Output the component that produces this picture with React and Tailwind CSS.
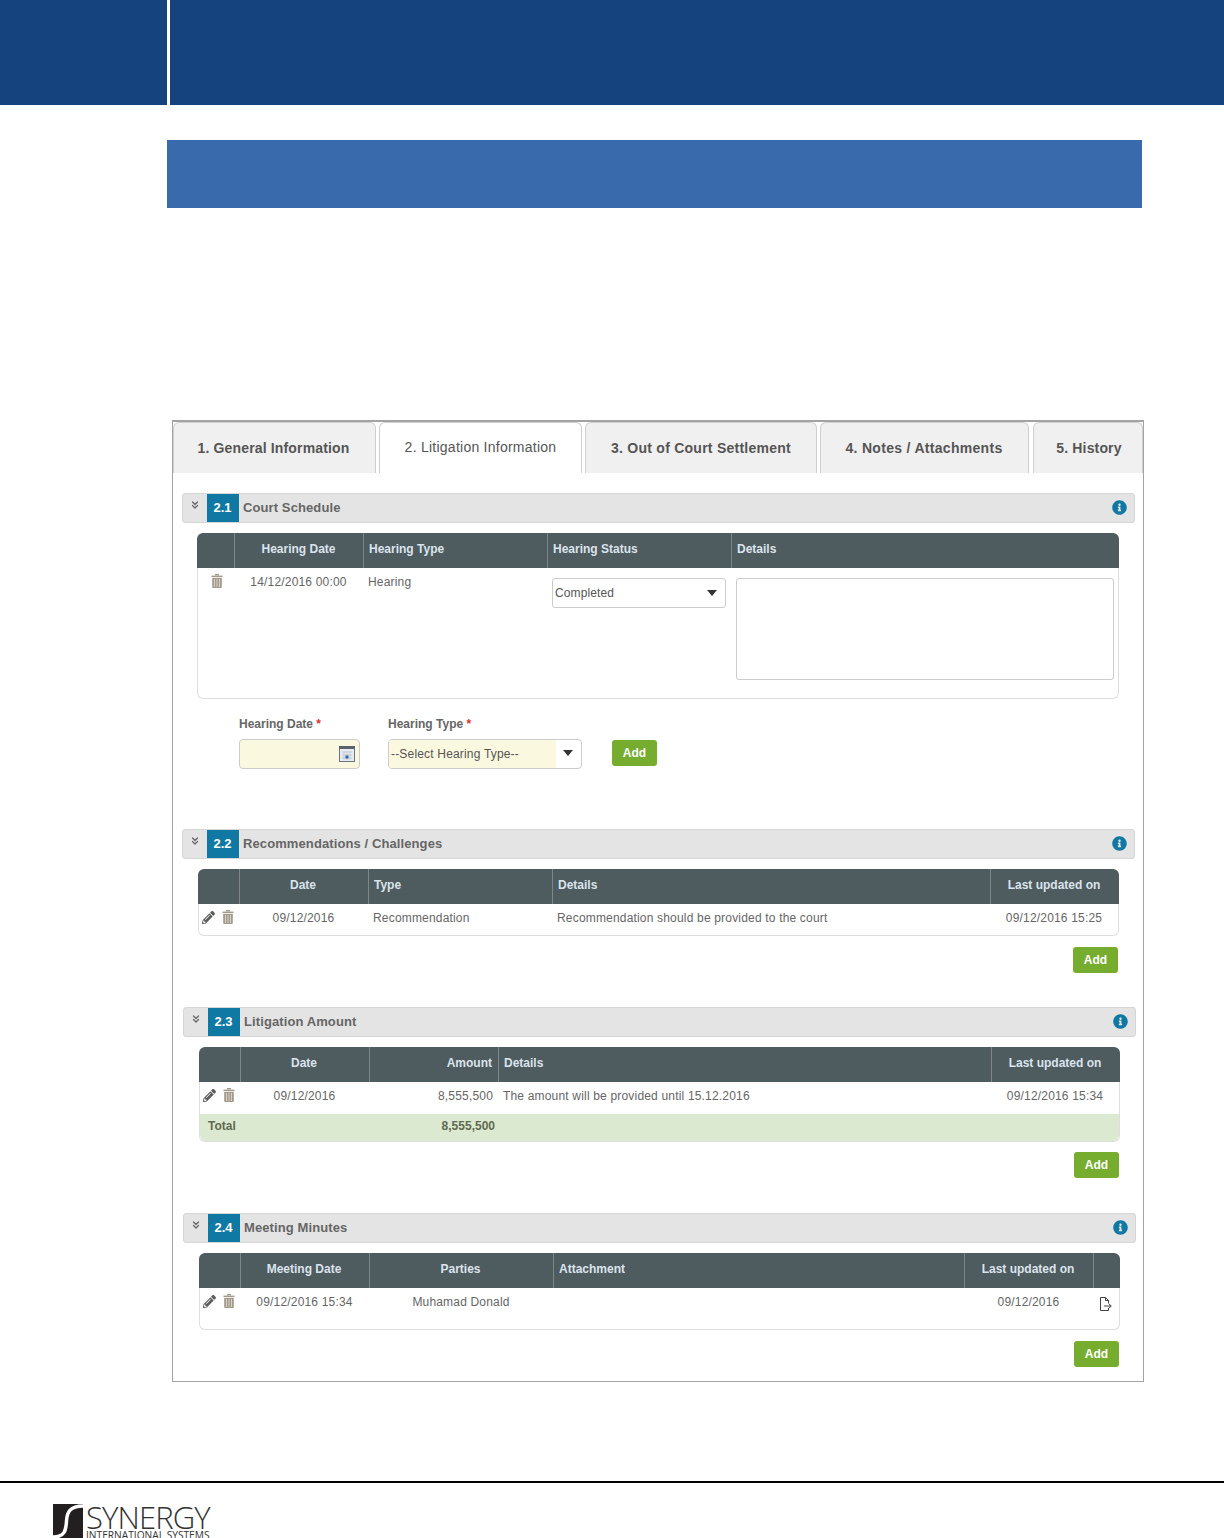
import { ChevronsDown } from 'lucide-react'
import { FaInfoCircle, FaPencilAlt } from 'react-icons/fa'

const tabs = [
  { label: '1. General Information', cls: 'w-[203px] mr-[3px] pr-[2px] tracking-[0.15px]' },
  { label: '2. Litigation Information', cls: 'w-[203px] mr-[3px] tracking-[0.25px]', active: true },
  { label: '3. Out of Court Settlement', cls: 'w-[232px] mr-[3px] tracking-[0.25px]' },
  { label: '4. Notes / Attachments', cls: 'w-[209px] mr-[4px] pr-[1px] tracking-[0.3px]' },
  { label: '5. History', cls: 'w-[110px] pl-[2px] tracking-[0.15px]' },
]

const Trash = () => (
  <svg width="12" height="14" viewBox="0 0 12 14" fill="#a39a8c">
    <rect x="4" y="0" width="4" height="1.4" />
    <rect x="0.5" y="1.6" width="11" height="1.6" />
    <path d="M1.2 4h9.6v9a1 1 0 0 1-1 1H2.2a1 1 0 0 1-1-1z" />
    <path d="M3.500 5v8M6 5v8M8.500 5v8" stroke="#e6e2da" strokeWidth="0.8" />
  </svg>
)

const RowIcons = ({ cls = 'pt-[6px]' }) => (
  <div className={`flex items-center self-start pl-[3px] gap-[7px] ${cls}`}>
    <FaPencilAlt className="text-[13px] text-[#5d5d5d]" />
    <Trash />
  </div>
)

const AddButton = ({ cls }) => (
  <button className={`w-[45px] h-[26px] rounded-[3px] bg-[#76ad2e] text-white font-bold text-[12px] ${cls}`}>Add</button>
)

const Section = ({ num, title, cls, children }) => (
  <section className={cls}>
    <div className="h-[30px] w-[953px] flex items-stretch bg-[#e4e4e4] border border-[#d6d6d6] rounded-[3px]">
      <div className="w-[24px] flex justify-center pt-[5px]">
        <ChevronsDown size={12} strokeWidth={2.5} className="text-[#666]" />
      </div>
      <div className="w-[32px] bg-[#0f78a3] text-white font-bold text-[13px] pr-[1px] flex items-center justify-center">{num}</div>
      <div className="flex-1 pl-[4px] pb-[1px] flex items-center text-[13px] tracking-[0.1px] font-bold text-[#666]">{title}</div>
      <div className="pr-[7px] pb-[1px] flex items-center">
        <FaInfoCircle className="text-[15px] text-[#0f78a3]" />
      </div>
    </div>
    {children}
  </section>
)

const Head = ({ children, cls = '' }) => (
  <div className={`flex items-center pb-[3px] border-l border-[#7d8789] text-[12px] font-bold text-[#dbe3ec] ${cls}`}>{children}</div>
)

const Cell = ({ children, cls = '' }) => (
  <div className={`text-[12px] tracking-[0.18px] text-[#666] ${cls}`}>{children}</div>
)

const CalendarIcon = () => (
  <svg width="16" height="16" viewBox="0 0 16 16">
    <rect x="0.5" y="0.5" width="15" height="15" fill="#e8ecf2" stroke="#6b7480" />
    <rect x="0" y="0" width="16" height="3" fill="#59626d" />
    <path d="M3 6h10M3 9h10M3 12h10M5 5v9M8 5v9M11 5v9" stroke="#b9c1cc" strokeWidth="0.7" />
    <rect x="6.500" y="9.500" width="3" height="3" fill="#2b64a8" />
  </svg>
)

const FileIcon = () => (
  <svg width="13" height="14" viewBox="0 0 13 14" fill="none" stroke="#444" strokeWidth="1">
    <path d="M1.500 0.500h5l3 3v3M6.500 0.500v3h3M9.500 11v2.500h-8V0.500" />
    <path d="M5 9h7M10 7l2.300 2-2.300 2" />
  </svg>
)

const Arrow = () => <span className="w-0 h-0 border-x-[5px] border-x-transparent border-t-[6px] border-t-[#333]" />

const SynergyLogo = () => (
  <div className="ml-[53px] mt-[21px] flex font-['Open_Sans',sans-serif] text-[#333]">
    <svg width="30" height="35" viewBox="0 0 30 35">
      <rect width="30" height="35" fill="#231f20" />
      <path d="M30 2C17 2 14 8 13.500 17S12 33 0 33" fill="none" stroke="#fff" strokeWidth="3.500" />
    </svg>
    <div className="ml-[3px] pt-[1px]">
      <div className="text-[31px] leading-[25px] font-light tracking-[-0.9px] whitespace-nowrap">SYNERGY</div>
      <div className="text-[10.200px] leading-[10px] whitespace-nowrap">INTERNATIONAL SYSTEMS</div>
    </div>
  </div>
)

const App = () => {
  return (
    <div className="h-[1538px] w-[1224px] overflow-hidden bg-white font-['Liberation_Sans',Arial,sans-serif]">
      <header className="h-[105px] bg-[#14437d] flex">
        <div className="w-[167px]" />
        <div className="w-[3px] bg-white" />
      </header>

      <div className="ml-[167px] mt-[35px] w-[975px] h-[68px] bg-[#396aab]" />

      <div className="ml-[172px] mt-[212px] w-[972px] border border-t-2 border-[#a3a3a3]">
        <div className="flex h-[51px]">
          {tabs.map((t) => (
            <div
              key={t.label}
              className={`${t.cls} flex items-center justify-center rounded-t-[6px] border-x border-t border-[#cfcfcf] text-[#555] text-[14px] ${t.active ? 'bg-white pb-[2px] font-normal' : 'bg-[#f0f0f0] font-bold'}`}
            >
              {t.label}
            </div>
          ))}
        </div>

        <Section num="2.1" title="Court Schedule" cls="ml-[9px] mt-[20px]">
          <div className="ml-[15px] mt-[10px] w-[922px]">
            <div className="h-[35px] rounded-t-[6px] bg-[#4e5b5f] grid grid-cols-[37px_129px_184px_184px_388px]">
              <div />
              <Head cls="justify-center pr-[1px]">Hearing Date</Head>
              <Head cls="pl-[5px]">Hearing Type</Head>
              <Head cls="pl-[5px]">Hearing Status</Head>
              <Head cls="pl-[5px]">Details</Head>
            </div>
            <div className="h-[131px] rounded-b-[6px] border border-t-0 border-[#dedede] grid grid-cols-[36px_129px_184px_184px_387px]">
              <div className="pl-[13px] pt-[6px]"><Trash /></div>
              <Cell cls="pt-[5px] text-center">14/12/2016 00:00</Cell>
              <Cell cls="pt-[5px] pl-[5px]">Hearing</Cell>
              <div className="pt-[10px] pl-[5px]">
                <div className="w-[174px] h-[30px] flex items-center justify-between pl-[2px] pr-[8px] rounded-[3px] border border-[#ccc] text-[12px] tracking-[0.1px] text-[#555]">
                  Completed
                  <Arrow />
                </div>
              </div>
              <div className="pt-[10px] pl-[5px]">
                <div className="w-[378px] h-[102px] rounded-[3px] border border-[#ccc]" />
              </div>
            </div>
          </div>
          <div className="ml-[57px] mt-[18px] flex items-start">
            <div className="w-[149px]">
              <div className="text-[12px] font-bold text-[#666] h-[15px] leading-[15px]">Hearing Date <span className="text-[#d33]">*</span></div>
              <div className="mt-[7px] w-[121px] h-[30px] rounded-[4px] border border-[#ccc] bg-[#fbf8e0] flex items-center justify-end pr-[4px]">
                <CalendarIcon />
              </div>
            </div>
            <div className="w-[224px]">
              <div className="text-[12px] font-bold text-[#666] h-[15px] leading-[15px]">Hearing Type <span className="text-[#d33]">*</span></div>
              <div className="mt-[7px] w-[194px] h-[30px] rounded-[4px] border border-[#ccc] flex overflow-hidden">
                <div className="w-[167px] bg-[#fbf8e0] pl-[2px] flex items-center text-[12px] tracking-[0.18px] text-[#555]">--Select Hearing Type--</div>
                <div className="flex-1 flex items-center justify-center pb-[2px] pr-[2px]"><Arrow /></div>
              </div>
            </div>
            <AddButton cls="mt-[23px]" />
          </div>
        </Section>

        <Section num="2.2" title="Recommendations / Challenges" cls="ml-[9px] mt-[60px]">
          <div className="ml-[16px] mt-[10px] w-[921px]">
            <div className="h-[35px] rounded-t-[6px] bg-[#4e5b5f] grid grid-cols-[41px_129px_184px_438px_129px]">
              <div />
              <Head cls="justify-center pr-[2px]">Date</Head>
              <Head cls="pl-[5px]">Type</Head>
              <Head cls="pl-[5px]">Details</Head>
              <Head cls="justify-center pr-[2px]">Last updated on</Head>
            </div>
            <div className="h-[32px] pb-[4px] rounded-b-[6px] border border-t-0 border-[#dedede] grid grid-cols-[40px_129px_184px_438px_128px] items-center">
              <RowIcons />
              <Cell cls="text-center">09/12/2016</Cell>
              <Cell cls="pl-[5px]">Recommendation</Cell>
              <Cell cls="pl-[5px]">Recommendation should be provided to the court</Cell>
              <Cell cls="text-center">09/12/2016 15:25</Cell>
            </div>
          </div>
          <div className="mt-[11px] w-[936px] flex justify-end">
            <AddButton />
          </div>
        </Section>

        <Section num="2.3" title="Litigation Amount" cls="ml-[10px] mt-[34px]">
          <div className="ml-[16px] mt-[10px] w-[921px]">
            <div className="h-[35px] rounded-t-[6px] bg-[#4e5b5f] grid grid-cols-[41px_129px_129px_493px_129px]">
              <div />
              <Head cls="justify-center pr-[2px]">Date</Head>
              <Head cls="justify-end pr-[6px]">Amount</Head>
              <Head cls="pl-[5px]">Details</Head>
              <Head cls="justify-center pr-[2px]">Last updated on</Head>
            </div>
            <div className="rounded-b-[6px] border border-t-0 border-[#dedede]">
              <div className="h-[32px] pb-[4px] grid grid-cols-[40px_129px_129px_493px_128px] items-center">
                <RowIcons />
                <Cell cls="text-center">09/12/2016</Cell>
                <Cell cls="text-right pr-[5px]">8,555,500</Cell>
                <Cell cls="pl-[5px]">The amount will be provided until 15.12.2016</Cell>
                <Cell cls="text-center">09/12/2016 15:34</Cell>
              </div>
              <div className="h-[27px] pb-[3px] bg-[#dbe9d0] rounded-b-[6px] grid grid-cols-[40px_129px_129px] items-center text-[12px] font-bold text-[#5f6b50]">
                <div className="pl-[8px]">Total</div>
                <div />
                <div className="text-right pr-[3px]">8,555,500</div>
              </div>
            </div>
          </div>
          <div className="mt-[10px] w-[936px] flex justify-end">
            <AddButton />
          </div>
        </Section>

        <Section num="2.4" title="Meeting Minutes" cls="ml-[10px] mt-[35px] pb-[14px]">
          <div className="ml-[16px] mt-[10px] w-[921px]">
            <div className="h-[35px] rounded-t-[6px] bg-[#4e5b5f] grid grid-cols-[41px_129px_184px_411px_129px_27px]">
              <div />
              <Head cls="justify-center pr-[2px]">Meeting Date</Head>
              <Head cls="justify-center pr-[2px]">Parties</Head>
              <Head cls="pl-[5px]">Attachment</Head>
              <Head cls="justify-center pr-[2px]">Last updated on</Head>
              <Head />
            </div>
            <div className="h-[42px] rounded-b-[6px] border border-t-0 border-[#dedede] grid grid-cols-[40px_129px_184px_411px_129px_26px] pt-[5px]">
              <RowIcons cls="pt-[1px]" />
              <Cell cls="text-center">09/12/2016 15:34</Cell>
              <Cell cls="text-center">Muhamad Donald</Cell>
              <div />
              <Cell cls="text-center">09/12/2016</Cell>
              <div className="pl-[6px] pt-[4px]"><FileIcon /></div>
            </div>
          </div>
          <div className="mt-[11px] w-[936px] flex justify-end">
            <AddButton />
          </div>
        </Section>
      </div>

      <footer className="mt-[99px] border-t-2 border-black">
        <SynergyLogo />
      </footer>
    </div>
  )
}

export default App
